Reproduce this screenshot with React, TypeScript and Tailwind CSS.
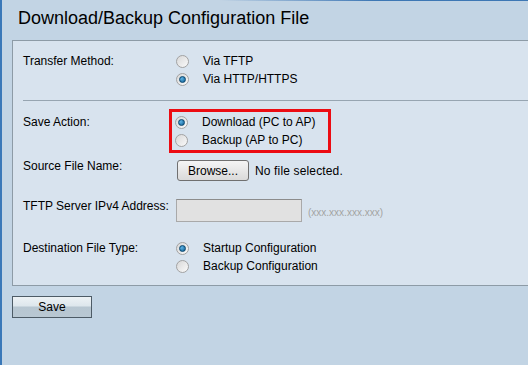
import React from 'react';

const font = { fontFamily: '"Liberation Sans", Arial, sans-serif' };

function Radio({ checked, label }: { checked?: boolean; label: string }) {
  return (
    <div className="flex items-center h-[18px]">
      <span className="w-[13px] h-[13px] rounded-full border border-[#a2a2a2] bg-gradient-to-br from-[#d8d8d8] to-[#fafafa] flex items-center justify-center shrink-0">
        {checked && (
          <span className="w-[7px] h-[7px] rounded-full bg-[radial-gradient(circle_at_35%_35%,#5fb4e6,#0a5a8e)] border border-[#08466f]" />
        )}
      </span>
      <span className="ml-[14px] text-[12px] leading-[18px] text-black whitespace-nowrap">{label}</span>
    </div>
  );
}

function Row({ label, children, className = '' }: { label: string; children: React.ReactNode; className?: string }) {
  return (
    <div className={`grid grid-cols-[153px_1fr] items-start ${className}`}>
      <div className="text-[12px] text-black whitespace-nowrap">{label}</div>
      <div>{children}</div>
    </div>
  );
}

export default function App() {
  return (
    <div style={font} className="relative w-[528px] h-[365px] overflow-hidden bg-[#c2d4e4] border-l-2 border-[#3a78b8]">
      {/* top accent line */}
      <div className="absolute top-0 left-[218px] right-0 h-px bg-gradient-to-r from-[#c2d4e4] via-[#3d77b4] to-[#3d77b4]" />
      {/* splitter grip */}
      <div className="absolute left-[-2px] top-[289px] flex flex-col gap-[2px]">
        <span className="w-[2px] h-px bg-white/80" />
        <span className="w-[2px] h-px bg-white/80" />
        <span className="w-[2px] h-px bg-white/80" />
        <span className="w-[2px] h-px bg-white/80" />
      </div>

      <div className="h-[40px] pt-[7px] pl-[16px]">
        <h1 className="text-[18px] leading-[22px] text-black">Download/Backup Configuration File</h1>
      </div>

      <div className="ml-[10px] w-[540px] bg-[#d8e3ee] border border-[#8d9ba6] pl-[10px] pb-[10px]">
        {/* Transfer method */}
        <Row label="Transfer Method:" className="pt-[11px] leading-[18px]">
          <Radio label="Via TFTP" />
          <Radio checked label="Via HTTP/HTTPS" />
        </Row>

        <div className="mt-[12px] h-px bg-[#97a5b1]" />

        {/* Save action */}
        <Row label="Save Action:" className="mt-[12px] leading-[18px]">
          <div className="relative -ml-px">
            <Radio checked label="Download (PC to AP)" />
            <Radio label="Backup (AP to PC)" />
            <span className="absolute left-[-6px] top-[-4px] w-[162px] h-[44px] border-[3px] border-[#ec0c12]" />
          </div>
        </Row>

        {/* Source file */}
        <Row label="Source File Name:" className="mt-[10px] leading-[14px]">
          <div className="flex items-center mt-px">
            <button className="ml-px w-[72px] h-[21px] rounded-[3px] border border-[#707070] bg-gradient-to-b from-[#f5f5f5] to-[#dadada] text-[12px] text-black">
              Browse...
            </button>
            <span className="ml-[6px] text-[12px] text-black tracking-[0.15px]">No file selected.</span>
          </div>
        </Row>

        {/* TFTP address */}
        <Row label="TFTP Server IPv4 Address:" className="mt-[18px] leading-[14px]">
          <div className="flex items-center">
            <div className="w-[126px] h-[23px] bg-[#e1e1e1] border border-[#a9a9a9] border-t-[#8c8c8c]" />
            <span className="ml-[6px] mt-[4px] text-[10px] text-[#a3a3a3]">(xxx.xxx.xxx.xxx)</span>
          </div>
        </Row>

        {/* Destination file type */}
        <Row label="Destination File Type:" className="mt-[17px] leading-[18px]">
          <Radio checked label="Startup Configuration" />
          <Radio label="Backup Configuration" />
        </Row>
      </div>

      <button className="ml-[10px] mt-[10px] w-[80px] h-[22px] border border-[#4d5b66] bg-[linear-gradient(#edf2f5_0%,#dde6ec_45%,#b7c6d1_50%,#b9c8d3_100%)] text-[12px] text-black">
        Save
      </button>
    </div>
  );
}
